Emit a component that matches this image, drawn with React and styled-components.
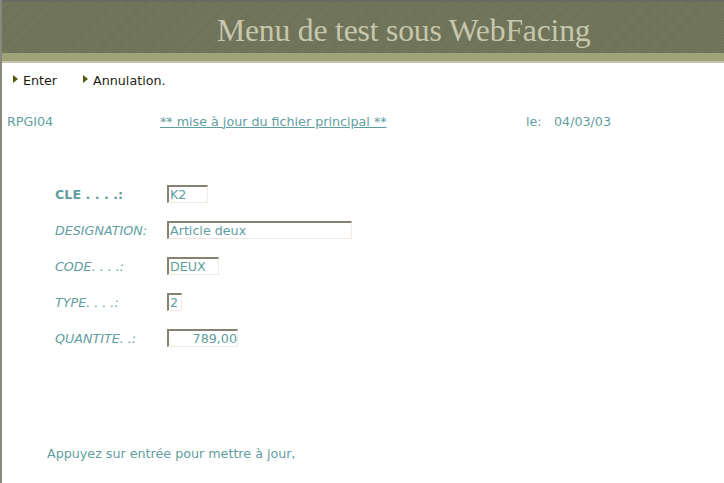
import React from 'react'
import styled, { createGlobalStyle } from 'styled-components'

const GlobalStyle = createGlobalStyle`
  html, body {
    margin: 0;
    padding: 0;
    background: #ffffff;
  }
  body {
    font-family: "DejaVu Sans", Verdana, sans-serif;
  }
`

const Page = styled.div`
  min-height: 483px;
  border-left: 2px solid #8a877c;
  box-sizing: border-box;
  display: flex;
  flex-direction: column;
`

const Header = styled.div`
  border-top: 2px solid #6b6a62;
  height: 51px;
  background-color: #6f7459;
  background-image: repeating-linear-gradient(
    135deg,
    rgba(255, 255, 255, 0.025) 0px,
    rgba(255, 255, 255, 0.025) 1px,
    rgba(0, 0, 0, 0.025) 1px,
    rgba(0, 0, 0, 0.025) 2px
  );
  display: flex;
  align-items: flex-end;
  padding-left: 215px;
  box-sizing: content-box;
`

const Title = styled.h1`
  margin: 0 0 4px;
  font-family: "Liberation Serif", "Times New Roman", serif;
  font-weight: normal;
  font-size: 31.7px;
  line-height: 36px;
  color: #c6c7ad;
  letter-spacing: -0.2px;
`

const Band = styled.div`
  height: 8px;
  background: #9ea477;
  border-bottom: 2px solid #c3c4ac;
`

const Menu = styled.ul`
  list-style: none;
  margin: 0;
  padding: 9px 0 0 11px;
  display: flex;
  gap: 26px;
  font-size: 12.7px;
  color: #1c1c10;
`

const MenuItem = styled.li`
  display: flex;
  align-items: center;
  gap: 5px;
  height: 16px;
`

const Arrow = styled.span`
  width: 0;
  height: 0;
  border-top: 4px solid transparent;
  border-bottom: 4px solid transparent;
  border-left: 5px solid #56580f;
  margin-top: -3px;
`

const InfoRow = styled.div`
  display: flex;
  align-items: center;
  padding: 25px 0 0 5px;
  font-size: 12.7px;
  color: #5f9ea0;
  height: 16px;
`

const Program = styled.span`
  width: 153px;
`

const Heading = styled.span`
  text-decoration: underline;
  width: 366px;
`

const DateLabel = styled.span`
  width: 28px;
`

const Form = styled.div`
  display: flex;
  flex-direction: column;
  gap: 18px;
  padding: 56px 0 0 53px;
`

const Field = styled.div`
  display: flex;
  align-items: center;
  height: 18px;
`

const Label = styled.span`
  width: 112px;
  font-size: 12.7px;
  color: #5f9ea0;
  font-weight: ${p => (p.$bold ? 'bold' : 'normal')};
  font-style: ${p => (p.$bold ? 'normal' : 'italic')};
`

const Input = styled.div`
  width: ${p => p.$w}px;
  height: 18px;
  box-sizing: border-box;
  border-style: solid;
  border-width: 2px 1px 1px 2px;
  border-color: #858271 #f1e8df #f1e8df #858271;
  font-size: 12.7px;
  color: #5f9ea0;
  line-height: 15px;
  padding-left: 1px;
  text-align: ${p => (p.$right ? 'right' : 'left')};
  white-space: nowrap;
  overflow: hidden;
`

const Footer = styled.div`
  margin-top: auto;
  padding: 0 0 22px 45px;
  font-size: 12.7px;
  color: #5f9ea0;
`

const fields = [
  { label: 'CLE . . . .:', bold: true, value: 'K2', w: 41 },
  { label: 'DESIGNATION:', value: 'Article deux', w: 185 },
  { label: 'CODE. . . .:', value: 'DEUX', w: 52 },
  { label: 'TYPE. . . .:', value: '2', w: 15 },
  { label: 'QUANTITE. .:', value: '789,00', w: 71, right: true },
]

export default function App() {
  return (
    <>
      <GlobalStyle />
      <Page>
        <Header>
          <Title>Menu de test sous WebFacing</Title>
        </Header>
        <Band />
        <Menu>
          <MenuItem><Arrow />Enter</MenuItem>
          <MenuItem><Arrow />Annulation.</MenuItem>
        </Menu>
        <InfoRow>
          <Program>RPGI04</Program>
          <Heading>** mise à jour du fichier principal **</Heading>
          <DateLabel>le:</DateLabel>
          <span>04/03/03</span>
        </InfoRow>
        <Form>
          {fields.map(f => (
            <Field key={f.label}>
              <Label $bold={f.bold}>{f.label}</Label>
              <Input $w={f.w} $right={f.right}>{f.value}</Input>
            </Field>
          ))}
        </Form>
        <Footer>Appuyez sur entrée pour mettre à jour,</Footer>
      </Page>
    </>
  )
}
